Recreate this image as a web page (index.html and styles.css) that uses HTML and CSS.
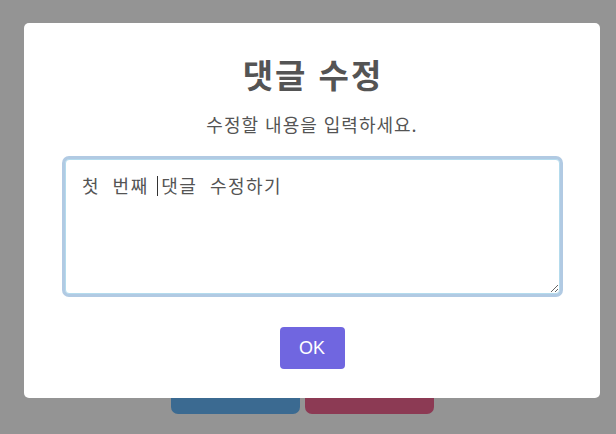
FILE: index.html
```
<!DOCTYPE html>
<html lang="ko">
<head>
    <meta charset="UTF-8">
    <meta name="viewport" content="width=device-width, initial-scale=1.0">
    <title>댓글 수정</title>
    <link rel="stylesheet" href="styles.css">
</head>
<body>
    <section class="page">
        <div class="page-actions">
            <button class="btn btn-edit">수정</button>
            <button class="btn btn-delete">삭제</button>
        </div>
    </section>
    <div class="overlay">
        <div class="popup">
            <h2 class="popup-title">댓글 수정</h2>
            <div class="popup-text">수정할 내용을 입력하세요.</div>
            <div class="input-wrap">
                <textarea class="popup-input">첫 번째 댓글 수정하기</textarea>
                <span class="caret"></span>
            </div>
            <div class="popup-actions">
                <button class="btn-ok">OK</button>
            </div>
        </div>
    </div>
</body>
</html>
```

FILE: styles.css
```
*{
    margin:0;padding:0;box-sizing:border-box;
}
body{
    background-color: white;
    font-family: "Noto Sans CJK KR", "Noto Sans", sans-serif;
}
.page{
    padding:358px 0 0 171px;
}
.page-actions{
    display:flex;
    gap:5px;
}
.btn{
    width:129px;
    height:56px;
    border:none;
    border-radius:7px;
    color:white;
    font-size:16px;
}
.btn-edit{
    background-color:#66b7fa;
}
.btn-delete{
    background-color:#f26491;
}
.overlay{
    position:fixed;
    inset:0;
    background-color: rgba(0,0,0,0.42);
    padding:23px 16px 0 24px;
}
.popup{
    background-color:white;
    border-radius:5px;
    height:375px;
    padding-top:32px;
    text-align:center;
    color:#545454;
}
.popup-title{
    font-size:33px;
    font-weight:700;
    line-height:38px;
    letter-spacing:2px;
    padding-left:2px;
}
.popup-text{
    margin-top:18px;
    font-size:18px;
    line-height:27px;
    letter-spacing:1px;
}
.input-wrap{
    position:relative;
    margin:21px 40px 0 41px;
}
.popup-input{
    display:block;
    width:100%;
    height:135px;
    padding:12px 16px;
    border:1px solid #b4dbed;
    border-radius:4px;
    box-shadow:0 0 0 3px rgba(100,150,200,0.5);
    font-family: "Noto Sans CJK KR", sans-serif;
    font-size:18px;
    line-height:27px;
    letter-spacing:1.5px;
    word-spacing:6px;
    color:#545454;
    outline:none;
    resize:vertical;
}
.caret{
    position:absolute;
    left:92px;
    top:17px;
    width:1px;
    height:20px;
    background-color:#333;
}
.popup-actions{
    margin-top:33px;
}
.btn-ok{
    width:65px;
    height:42px;
    border:none;
    border-radius:4px;
    background-color:#7066e0;
    color:white;
    font-family:"Liberation Sans", Arial, sans-serif;
    font-size:18px;
}
```
